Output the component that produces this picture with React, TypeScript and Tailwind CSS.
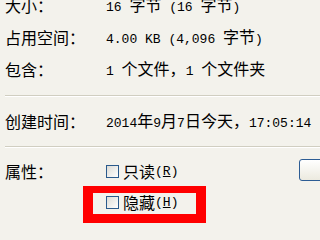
const cjk = "font-['Noto_Sans_CJK_SC',sans-serif] text-[16px]";
const mono = "font-['Liberation_Mono','Noto_Sans_CJK_SC',monospace] text-[13px]";

const Mixed = ({ text }: { text: string }) => {
  const parts = text.split(/([\u3000-\u9fff\uff00-\uffef]+)/).filter(Boolean);
  return (
    <span className="whitespace-pre leading-none">
      {parts.map((p, i) =>
        /[\u3000-\u9fff\uff00-\uffef]/.test(p) ? (
          <span key={i} className={cjk}>
            {p}
          </span>
        ) : (
          <span key={i} className={mono}>
            {p}
          </span>
        )
      )}
    </span>
  );
};

const Row = ({ label, value, className = "" }: { label: string; value: string; className?: string }) => (
  <div className={`flex items-center h-[32px] ${className}`}>
    <div className={`w-[101px] shrink-0 ${cjk} leading-none`}>{label}</div>
    <Mixed text={value} />
  </div>
);

const Divider = ({ className }: { className: string }) => (
  <div className={`${className} h-[2px] border-t border-[#d0cec1] bg-white w-[400px]`} />
);

const Checkbox = ({ label, hotkey }: { label: string; hotkey: string }) => (
  <div className="flex items-center">
    <div className="w-[13px] h-[13px] mr-[4px] border border-[#2a5a8c] bg-gradient-to-br from-[#dcdcd6] to-white" />
    <span className={`${cjk} leading-none`}>{label}</span>
    <span className={`${mono} leading-none`}>
      (<span className="underline">{hotkey}</span>)
    </span>
  </div>
);

export default function App() {
  return (
    <div className="relative w-[320px] h-[240px] overflow-hidden bg-[#f3f2ec] text-black">
      <div className="pl-[5px] -mt-[11px]">
        <Row label="大小：" value="16 字节 (16 字节)" />
        <Row label="占用空间：" value="4.00 KB (4,096 字节)" />
        <Row label="包含：" value="1 个文件，1 个文件夹" />
        <Divider className="mt-[10px]" />
        <Row className="mt-[8px]" label="创建时间：" value="2014年9月7日今天，17:05:14" />
        <Divider className="mt-[9px]" />
        <div className="flex mt-[7px]">
          <div className={`w-[101px] shrink-0 ${cjk} leading-none pt-[8px]`}>属性：</div>
          <div className="flex flex-col w-[193px] shrink-0">
            <div className="h-[32px] flex items-center">
              <Checkbox label="只读" hotkey="R" />
            </div>
            <div className="h-[30px] flex items-center">
              <Checkbox label="隐藏" hotkey="H" />
            </div>
          </div>
          <button className="self-start mt-[4px] h-[22px] w-[80px] shrink-0 rounded-[3px] border border-[#2c5c94] bg-gradient-to-b from-white to-[#eceadf]" />
        </div>
      </div>
      <div className="absolute left-[83px] top-[186px] w-[123px] h-[37px] border-[#ff0000] border-l-[10px] border-r-[10px] border-t-[7px] border-b-[9px]" />
    </div>
  );
}
